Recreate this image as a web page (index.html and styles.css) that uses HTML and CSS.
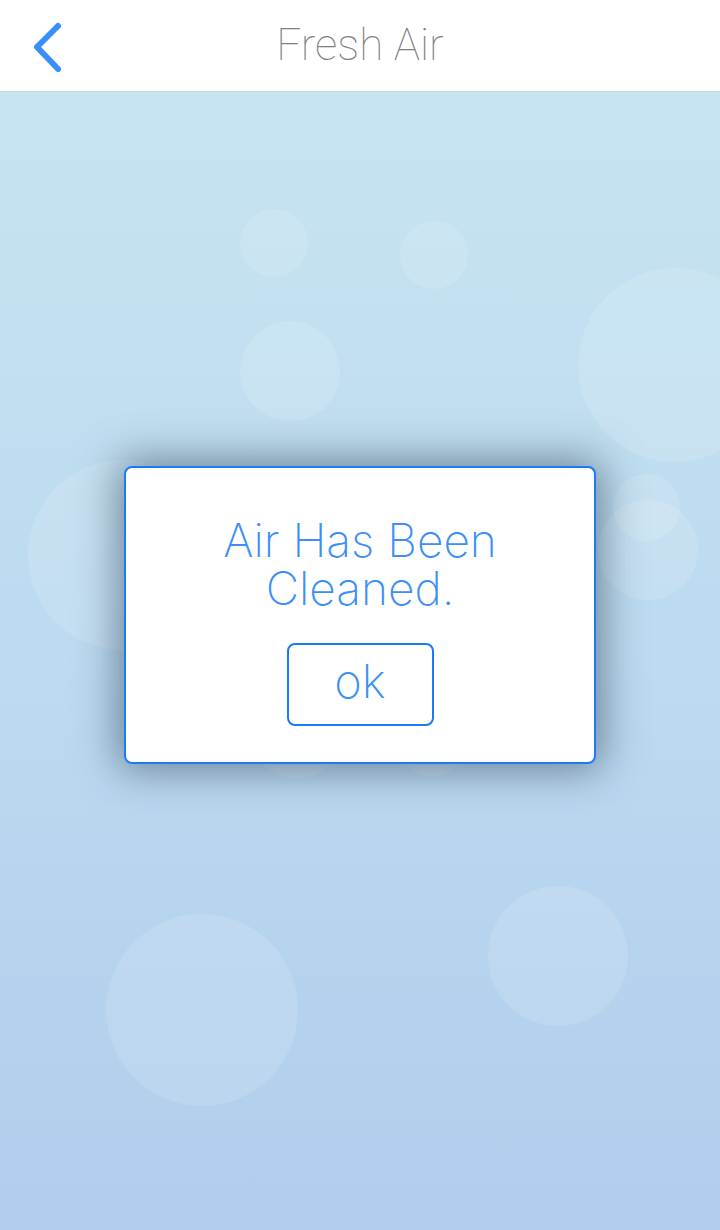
FILE: index.html
```html
<!DOCTYPE html>
<html lang="en">
<head>
<meta charset="utf-8">
<title>Fresh Air</title>
<link rel="stylesheet" href="styles.css">
</head>
<body>
<div class="app">
  <header class="topbar">
    <a class="back" href="#" aria-label="Back">
      <svg width="40" height="66" viewBox="0 0 40 66" aria-hidden="true">
        <path d="M29 12 L8 33 L29 55" fill="none" stroke="#3a8ef8" stroke-width="6" stroke-linecap="round" stroke-linejoin="round"/>
      </svg>
    </a>
    <h1 class="title">Fresh Air</h1>
  </header>
  <main class="stage">
    <div class="bubbles" aria-hidden="true">
      <span class="bubble b1"></span>
      <span class="bubble b2"></span>
      <span class="bubble b3"></span>
      <span class="bubble b4"></span>
      <span class="bubble b5"></span>
      <span class="bubble b6"></span>
      <span class="bubble b7"></span>
      <span class="bubble b8"></span>
      <span class="bubble b9"></span>
      <span class="bubble b10"></span>
      <span class="bubble b11"></span>
    </div>
    <div class="dialog" role="dialog">
      <p class="message"><span class="line">Air Has Been</span><span class="line">Cleaned.</span></p>
      <button class="ok" type="button">ok</button>
    </div>
  </main>
</div>
</body>
</html>
```

FILE: styles.css
```css
* { box-sizing: border-box; }
html, body { margin: 0; padding: 0; }
body {
  width: 720px;
  height: 1230px;
  overflow: hidden;
  font-family: "Roboto", "Liberation Sans", sans-serif;
  background: #b0cdec;
}
.app {
  display: flex;
  flex-direction: column;
  height: 1230px;
}
.topbar {
  position: relative;
  height: 92px;
  flex: 0 0 92px;
  background: #ffffff;
  border-bottom: 1px solid #d6d6d6;
  display: flex;
  align-items: center;
  justify-content: center;
}
.back {
  position: absolute;
  left: 29px;
  top: 14px;
  display: block;
  width: 40px;
  height: 66px;
}
.back svg { display: block; }
.title {
  margin: 0;
  font-weight: 100;
  font-size: 44px;
  color: #808080;
  letter-spacing: 0;
  line-height: 1;
  padding-bottom: 2px;
}
.stage {
  position: relative;
  flex: 1 1 auto;
  background: linear-gradient(to bottom, #c6e4f1 0%, #bcdaf0 50%, #b0cdec 100%);
  padding-top: 374px;
}
.bubbles {
  position: absolute;
  inset: 0;
  overflow: hidden;
}
.bubble {
  position: absolute;
  border-radius: 50%;
  background: rgba(255, 255, 255, 0.13);
}
/* stage origin is at y = 92 */
.b1 { left: 240px; top: 117px; width: 68px; height: 68px; }
.b2 { left: 400px; top: 129px; width: 68px; height: 68px; }
.b3 { left: 240px; top: 229px; width: 100px; height: 100px; }
.b4 { left: 578px; top: 176px; width: 194px; height: 194px; }
.b5 { left: 28px; top: 368px; width: 190px; height: 190px; }
.b6 { left: 613px; top: 382px; width: 67px; height: 67px; }
.b7 { left: 598px; top: 408px; width: 100px; height: 100px; }
.b8 { left: 247px; top: 586px; width: 100px; height: 100px; }
.b9 { left: 398px; top: 616px; width: 68px; height: 68px; }
.b10 { left: 106px; top: 822px; width: 192px; height: 192px; }
.b11 { left: 488px; top: 794px; width: 140px; height: 140px; }

.dialog {
  position: relative;
  width: 472px;
  height: 298px;
  margin: 0 auto;
  background: #ffffff;
  border: 2px solid #1a7bf7;
  border-radius: 8px;
  box-shadow: 0 0 42px 6px rgba(40, 60, 80, 0.55);
  display: flex;
  flex-direction: column;
  align-items: center;
  padding-top: 48px;
}
.message {
  margin: 0;
  display: flex;
  flex-direction: column;
  align-items: center;
  font-family: "Inter", "Roboto", sans-serif;
  font-weight: 200;
  font-size: 46px;
  color: #3d8ff8;
}
.line {
  display: block;
  height: 48px;
  line-height: 48px;
  white-space: nowrap;
}
.ok {
  margin-top: 31px;
  width: 147px;
  height: 83px;
  background: #ffffff;
  border: 2px solid #1a7bf7;
  border-radius: 8px;
  font-family: "Inter", "Roboto", sans-serif;
  font-weight: 200;
  font-size: 47px;
  color: #3d8ff8;
  padding: 0 0 8px 0;
  line-height: 1;
  cursor: pointer;
}
```
